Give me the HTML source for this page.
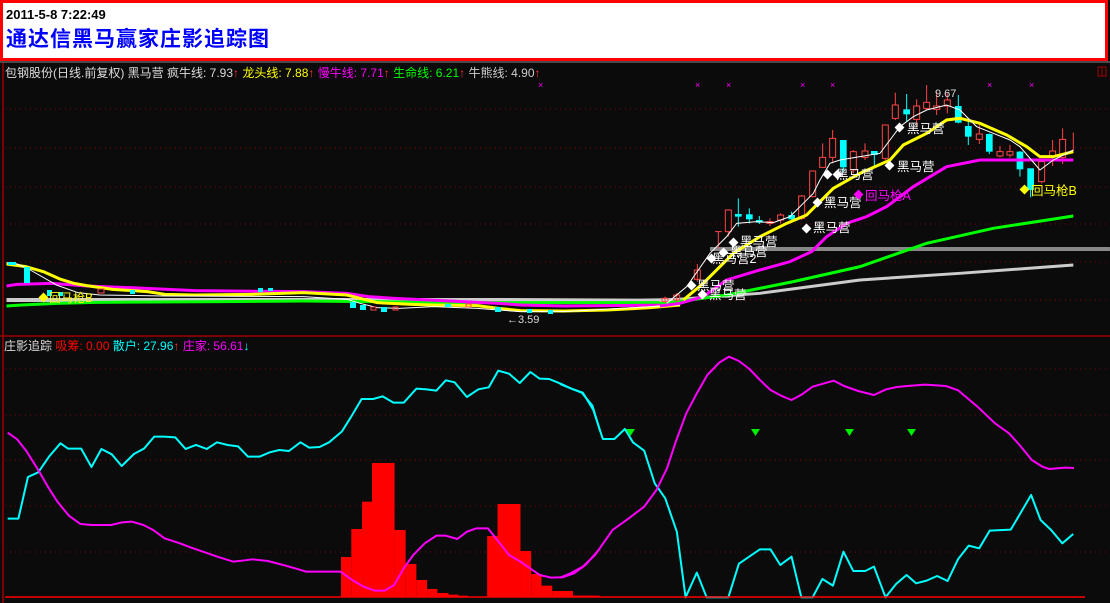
<!DOCTYPE html>
<html><head><meta charset="utf-8"><style>
body{margin:0;width:1110px;height:603px;overflow:hidden;background:#0b0b0b;font-family:"Liberation Sans","Noto Sans CJK SC",sans-serif}
svg{position:absolute;left:0;top:0}
text{font-family:"Liberation Sans","Noto Sans CJK SC",sans-serif}
</style></head><body>
<svg width="1110" height="603" viewBox="0 0 1110 603">
<rect x="0" y="0" width="1110" height="603" fill="#0b0b0b"/>
<!-- top box -->
<rect x="1.5" y="1.5" width="1105" height="58" fill="#fff" stroke="#f00" stroke-width="3"/>
<text x="6" y="19" font-size="13" font-weight="bold" fill="#000">2011-5-8 7:22:49</text>
<text x="6" y="46" font-size="21" font-weight="bold" fill="#0000ff" letter-spacing="1">通达信黑马赢家庄影追踪图</text>
<line x1="0" y1="62" x2="1110" y2="62" fill="none" stroke="#888" stroke-width="1"/>
<!-- axes -->
<line x1="3" y1="63" x2="3" y2="603" stroke="#a00000" stroke-width="1.5"/>
<line x1="0" y1="336" x2="1110" y2="336" stroke="#a00000" stroke-width="1.5"/>
<rect x="1098" y="67" width="8" height="9" fill="none" stroke="#a00000"/>
<line x1="1102" y1="67" x2="1102" y2="76" stroke="#a00000"/>
<g stroke="#8b0000" stroke-dasharray="1,4" stroke-width="1">
<line x1="5" y1="109" x2="1110" y2="109"/><line x1="5" y1="148" x2="1110" y2="148"/><line x1="5" y1="187" x2="1110" y2="187"/><line x1="5" y1="224" x2="1110" y2="224"/><line x1="5" y1="262" x2="1110" y2="262"/><line x1="5" y1="300" x2="1110" y2="300"/>
<line x1="5" y1="369" x2="1110" y2="369"/><line x1="5" y1="415" x2="1110" y2="415"/><line x1="5" y1="460" x2="1110" y2="460"/><line x1="5" y1="506" x2="1110" y2="506"/><line x1="5" y1="552" x2="1110" y2="552"/>
</g>
<!-- header texts -->
<text x="5" y="77" font-size="12" fill="#ddd">包钢股份(日线.前复权) 黑马营 疯牛线: 7.93<tspan fill="#f33">↑</tspan> <tspan fill="#ff0">龙头线: 7.88</tspan><tspan fill="#f33">↑</tspan> <tspan fill="#f0f">慢牛线: 7.71</tspan><tspan fill="#f33">↑</tspan> <tspan fill="#0f0">生命线: 6.21</tspan><tspan fill="#f33">↑</tspan> <tspan fill="#ccc">牛熊线: 4.90</tspan><tspan fill="#f33">↑</tspan></text>
<text x="4" y="350" font-size="12" fill="#ddd">庄影追踪 <tspan fill="#f00"> 吸筹: 0.00</tspan><tspan fill="#0ff">  散户: 27.96</tspan><tspan fill="#f33">↑</tspan><tspan fill="#f0f">  庄家: 56.61</tspan><tspan fill="#0ff">↓</tspan></text>
<!-- magenta x markers -->
<g fill="#f0f" font-size="9"><text x="695" y="88">×</text><text x="726" y="88">×</text><text x="800" y="88">×</text><text x="830" y="88">×</text><text x="987" y="88">×</text><text x="1029" y="88">×</text><text x="538" y="88">×</text></g>

<!-- upper left lines (zoom4 coords) -->
<g transform="translate(0,240) scale(0.4337,0.3333)" fill="none" stroke-linejoin="round">
<polyline vector-effect="non-scaling-stroke" stroke="#ccc" stroke-width="4" points="15,180 1160,180 1475,182 1568,180"/>
<polyline vector-effect="non-scaling-stroke" stroke="#00ff00" stroke-width="3" points="15,198 50,195 130,190 220,187 510,185 700,183 1000,187 1100,188 1568,188"/>
<polyline vector-effect="non-scaling-stroke" stroke="#f0f" stroke-width="3" points="15,138 40,133 120,130 200,138 300,143 450,152 700,155 800,160 850,170 910,175 1150,190 1200,195 1300,198 1568,195"/>
<polyline vector-effect="non-scaling-stroke" stroke="#ff0" stroke-width="3" points="15,72 60,80 100,95 140,118 170,130 200,137 260,148 340,155 380,163 450,165 580,163 700,158 800,165 830,175 870,188 950,193 1000,195 1100,197 1150,205 1200,212 1300,213 1400,210 1500,203 1568,195"/>
<polyline vector-effect="non-scaling-stroke" stroke="#fff" stroke-width="1" points="15,68 40,72 70,90 130,135 180,158 230,165 380,168 700,170 800,178 830,190 870,203 920,205 1000,200 1100,205 1200,215 1300,215 1568,195"/>
</g>
<!-- left candles -->
<g>
<rect x="24" y="267" width="6" height="16" fill="#0ff"/><rect x="8" y="262" width="8" height="3" fill="#0ff"/>
<rect x="47" y="290" width="5" height="6" fill="#0ff"/><rect x="58" y="292" width="5" height="4" fill="#0ff"/>
<rect x="98" y="289" width="6" height="4" fill="none" stroke="#f44"/><rect x="130" y="290" width="5" height="4" fill="#0ff"/>
<rect x="258" y="288" width="5" height="4" fill="#0ff"/><rect x="268" y="288" width="5" height="3" fill="#0ff"/>
<rect x="350" y="302" width="6" height="6" fill="#0ff"/><rect x="360" y="305" width="6" height="5" fill="#0ff"/>
<rect x="371" y="307" width="5" height="3" fill="none" stroke="#f44"/><rect x="381" y="307" width="6" height="5" fill="#0ff"/>
<rect x="393" y="307" width="5" height="3" fill="none" stroke="#f44"/><rect x="445" y="304" width="6" height="3" fill="#0ff"/>
<rect x="466" y="304" width="5" height="3" fill="none" stroke="#f44"/><rect x="495" y="307" width="6" height="5" fill="#0ff"/>
<rect x="527" y="309" width="5" height="4" fill="#0ff"/><rect x="548" y="310" width="5" height="4" fill="#0ff"/>
</g>
<text x="507" y="323" font-size="11" fill="#ddd">←3.59</text>
<rect x="40" y="294" width="7" height="7" fill="#ff0" transform="rotate(45 43.5 297.5)"/>
<text x="49" y="302" font-size="12" fill="#ff0">回马枪B</text>

<!-- upper right (zoom3 coords, uniform) -->
<g transform="translate(660,80) scale(0.3333)" fill="none">
<polyline vector-effect="non-scaling-stroke" stroke="#888" stroke-width="4" points="150,507 1350,507"/>
<polyline vector-effect="non-scaling-stroke" stroke="#ccc" stroke-width="3" points="0,662 300,640 600,600 900,580 1240,555"/>
<polyline vector-effect="non-scaling-stroke" stroke="#00ff00" stroke-width="3" points="0,672 200,645 400,605 600,560 800,490 1000,445 1240,408"/>
<g stroke-width="1" vector-effect="non-scaling-stroke">
<path vector-effect="non-scaling-stroke" stroke="#f44" d="M15,650V668M50,640V665M112,552V605M205,388V470M330,415V438M362,400V430M425,345V420M458,273V352M488,190V262M518,150V250M580,210V280M615,190V240M676,135V240M706,38V120M770,58V140M800,15V90M830,35V105M862,40V100M958,135V192M1020,198V232M1050,195V232M1145,240V310M1178,180V258M1208,145V252M1240,158V215M165,455H185M175,455V505"/>
<path vector-effect="non-scaling-stroke" stroke="#0ff" d="M235,355V440M268,385V430M298,408V432M395,395V428M550,180V275M643,213V265M740,42V125M895,45V130M925,120V195M988,160V222M1080,213V290M1112,265V352"/>
</g>
<g stroke="#f44" stroke-width="1">
<rect vector-effect="non-scaling-stroke" x="6" y="655" width="18" height="10"/><rect vector-effect="non-scaling-stroke" x="41" y="645" width="18" height="15"/>
<rect vector-effect="non-scaling-stroke" x="103" y="570" width="18" height="28"/><rect vector-effect="non-scaling-stroke" x="196" y="390" width="18" height="65" fill="#0b0b0b"/>
<rect vector-effect="non-scaling-stroke" x="321" y="425" width="18" height="5"/><rect vector-effect="non-scaling-stroke" x="353" y="405" width="18" height="15" fill="#0b0b0b"/>
<rect vector-effect="non-scaling-stroke" x="416" y="348" width="18" height="67" fill="#0b0b0b"/><rect vector-effect="non-scaling-stroke" x="449" y="273" width="18" height="77" fill="#0b0b0b"/>
<rect vector-effect="non-scaling-stroke" x="479" y="232" width="18" height="30" fill="#0b0b0b"/><rect vector-effect="non-scaling-stroke" x="509" y="175" width="18" height="57" fill="#0b0b0b"/>
<rect vector-effect="non-scaling-stroke" x="571" y="215" width="18" height="55" fill="#0b0b0b"/><rect vector-effect="non-scaling-stroke" x="606" y="213" width="18" height="19" fill="#0b0b0b"/>
<rect vector-effect="non-scaling-stroke" x="667" y="135" width="18" height="100" fill="#0b0b0b"/><rect vector-effect="non-scaling-stroke" x="697" y="75" width="18" height="40" fill="#0b0b0b"/>
<rect vector-effect="non-scaling-stroke" x="761" y="78" width="18" height="40" fill="#0b0b0b"/><rect vector-effect="non-scaling-stroke" x="791" y="67" width="18" height="18" fill="#0b0b0b"/>
<rect vector-effect="non-scaling-stroke" x="821" y="78" width="18" height="10" fill="#0b0b0b"/><rect vector-effect="non-scaling-stroke" x="853" y="60" width="18" height="18" fill="#0b0b0b"/>
<rect vector-effect="non-scaling-stroke" x="949" y="162" width="18" height="16" fill="#0b0b0b"/><rect vector-effect="non-scaling-stroke" x="1011" y="215" width="18" height="13" fill="#0b0b0b"/>
<rect vector-effect="non-scaling-stroke" x="1041" y="215" width="18" height="10" fill="#0b0b0b"/><rect vector-effect="non-scaling-stroke" x="1136" y="245" width="18" height="60" fill="#0b0b0b"/>
<rect vector-effect="non-scaling-stroke" x="1169" y="213" width="18" height="15" fill="#0b0b0b"/><rect vector-effect="non-scaling-stroke" x="1199" y="178" width="18" height="54" fill="#0b0b0b"/>
</g>
<g fill="#0ff">
<rect x="225" y="402" width="20" height="8"/><rect x="258" y="403" width="20" height="15"/><rect x="288" y="420" width="20" height="8"/><rect x="385" y="405" width="20" height="13"/>
<rect x="540" y="180" width="20" height="82"/><rect x="633" y="213" width="20" height="12"/><rect x="730" y="88" width="20" height="15"/><rect x="885" y="78" width="20" height="50"/>
<rect x="915" y="138" width="20" height="32"/><rect x="978" y="162" width="20" height="53"/><rect x="1070" y="215" width="20" height="53"/><rect x="1102" y="265" width="20" height="65"/>
</g>
<polyline vector-effect="non-scaling-stroke" stroke="#f0f" stroke-width="3" points="0,678 60,670 130,650 200,600 300,570 390,545 455,515 500,470 560,430 620,410 680,380 760,320 860,260 960,240 1080,240 1240,240"/>
<polyline vector-effect="non-scaling-stroke" stroke="#ff0" stroke-width="3" points="70,660 130,610 170,570 220,520 300,470 380,430 440,405 470,375 520,325 600,280 690,240 730,195 800,160 860,120 900,115 960,130 1040,165 1100,200 1140,230 1180,230 1240,215"/>
<polyline vector-effect="non-scaling-stroke" stroke="#fff" stroke-width="1" points="20,670 80,620 150,520 200,470 230,430 290,425 340,428 390,410 430,370 460,340 480,300 510,250 540,240 600,230 660,220 690,180 720,140 760,110 800,90 860,75 900,90 950,140 1000,160 1050,180 1080,200 1140,270 1180,240 1240,210"/>
</g>
<!-- labels upper -->
<g font-size="12.5" fill="#fff">
<text x="935" y="97" font-size="11" fill="#ddd">9.67</text>
<text x="907" y="133">黑马营</text><text x="897" y="171">黑马营</text><text x="836" y="179">黑马营</text><text x="824" y="207">黑马营</text><text x="813" y="232">黑马营</text>
<text x="740" y="246">黑马营</text><text x="730" y="256">黑马营</text><text x="712" y="263">黑马营2</text><text x="697" y="290">黑马营</text><text x="709" y="299">黑马营</text>
</g>
<g fill="#fff">
<rect x="896" y="124" width="7" height="7" transform="rotate(45 899.5 127.5)"/>
<rect x="886" y="162" width="7" height="7" transform="rotate(45 889.5 165.5)"/>
<rect x="824" y="171" width="7" height="7" transform="rotate(45 827.5 174.5)"/>
<rect x="834" y="171" width="7" height="7" transform="rotate(45 837.5 174.5)"/>
<rect x="814" y="199" width="7" height="7" transform="rotate(45 817.5 202.5)"/>
<rect x="803" y="225" width="7" height="7" transform="rotate(45 806.5 228.5)"/>
<rect x="730" y="239" width="7" height="7" transform="rotate(45 733.5 242.5)"/>
<rect x="720" y="249" width="7" height="7" transform="rotate(45 723.5 252.5)"/>
<rect x="708" y="255" width="7" height="7" transform="rotate(45 711.5 258.5)"/>
<rect x="688" y="282" width="7" height="7" transform="rotate(45 691.5 285.5)"/>
<rect x="699" y="291" width="7" height="7" transform="rotate(45 702.5 294.5)"/>
</g>
<rect x="855" y="191" width="7" height="7" fill="#f0f" transform="rotate(45 858.5 194.5)"/>
<text x="865" y="200" font-size="12.5" fill="#f0f">回马枪A</text>
<rect x="1021" y="186" width="7" height="7" fill="#ff0" transform="rotate(45 1024.5 189.5)"/>
<text x="1031" y="195" font-size="12.5" fill="#ff0">回马枪B</text>

<!-- lower panel left (zoom6) -->
<g transform="translate(0,355) scale(0.3827,0.3333)">
<g fill="#f00">
<rect x="891" y="606" width="27" height="121"/><rect x="918" y="522" width="28" height="205"/><rect x="946" y="440" width="26" height="287"/><rect x="972" y="324" width="59" height="403"/>
<rect x="1031" y="525" width="29" height="202"/><rect x="1060" y="627" width="28" height="100"/><rect x="1088" y="675" width="28" height="52"/><rect x="1116" y="702" width="27" height="25"/>
<rect x="1143" y="714" width="29" height="13"/><rect x="1172" y="719" width="26" height="8"/><rect x="1198" y="722" width="24" height="5"/>
<rect x="1273" y="543" width="27" height="184"/><rect x="1300" y="447" width="60" height="280"/><rect x="1360" y="588" width="28" height="139"/><rect x="1388" y="657" width="27" height="70"/>
<rect x="1415" y="692" width="28" height="35"/><rect x="1443" y="708" width="25" height="19"/><rect x="1468" y="716" width="29" height="11"/><rect x="1497" y="722" width="71" height="5"/>
</g>
<g fill="none" stroke-linejoin="round">
<polyline vector-effect="non-scaling-stroke" stroke="#0ff" stroke-width="2" points="20,491 48,491 73,366 100,352 128,305 158,265 178,281 212,281 239,336 265,282 292,298 318,333 350,297 377,280 403,245 428,245 458,247 485,282 512,270 540,282 567,262 595,270 622,274 648,305 678,305 705,292 730,285 755,288 785,262 808,278 835,276 860,262 893,230 915,190 945,132 975,132 1000,124 1028,143 1055,143 1088,101 1115,103 1140,107 1165,76 1188,82 1220,126 1250,103 1277,97 1302,47 1330,56 1358,84 1386,51 1410,71 1435,72 1465,86 1495,102 1520,113 1548,152 1568,228"/>
<polyline vector-effect="non-scaling-stroke" stroke="#f0f" stroke-width="2" points="20,233 45,253 70,290 100,345 125,395 150,440 180,482 210,507 240,510 290,510 320,502 345,500 375,510 400,525 430,550 470,565 500,578 540,594 570,606 610,620 640,616 660,613 700,618 740,630 780,643 800,650 890,650 920,675 950,695 980,707 1005,707 1030,690 1055,640 1080,600 1110,565 1140,542 1165,542 1195,552 1220,530 1245,520 1275,520 1300,556 1330,600 1360,620 1385,640 1410,660 1440,668 1470,667 1500,655 1530,630 1568,580"/>
</g>
</g>
<!-- lower panel right (zoom7) -->
<g transform="translate(560,355) scale(0.3508,0.3333)" fill="none" stroke-linejoin="round">
<rect x="0" y="708" width="37" height="19" fill="#f00"/><rect x="37" y="722" width="60" height="5" fill="#f00"/>
<polyline vector-effect="non-scaling-stroke" stroke="#0ff" stroke-width="2" points="0,87 30,100 65,113 95,165 122,252 155,252 185,222 208,262 240,287 270,385 300,430 333,530 358,727 390,653 418,727 480,727 510,626 570,583 600,583 628,630 660,605 688,727 720,727 748,672 778,692 808,590 836,648 870,648 895,635 928,727 958,687 988,660 1015,685 1045,677 1075,663 1105,678 1135,612 1165,572 1195,580 1225,527 1285,524 1343,420 1370,495 1400,525 1432,565 1463,537"/>
<polyline vector-effect="non-scaling-stroke" stroke="#f0f" stroke-width="2" points="0,668 30,655 65,635 100,600 150,525 190,495 240,455 275,405 305,340 330,260 360,175 390,115 420,60 455,22 482,5 510,18 540,42 570,75 600,105 630,122 660,135 690,118 720,95 780,77 810,93 850,108 895,120 930,103 960,96 990,93 1040,89 1100,93 1135,106 1190,155 1240,205 1280,235 1310,270 1345,315 1375,335 1395,342 1440,338 1465,339"/>
</g>
<line x1="5" y1="597" x2="1085" y2="597" stroke="#f00" stroke-width="1.5"/>
<g fill="#00ee00">
<path d="M626,429h9l-4.5,7z"/><path d="M751,429h9l-4.5,7z"/><path d="M845,429h9l-4.5,7z"/><path d="M907,429h9l-4.5,7z"/>
</g>
</svg>
</body></html>
